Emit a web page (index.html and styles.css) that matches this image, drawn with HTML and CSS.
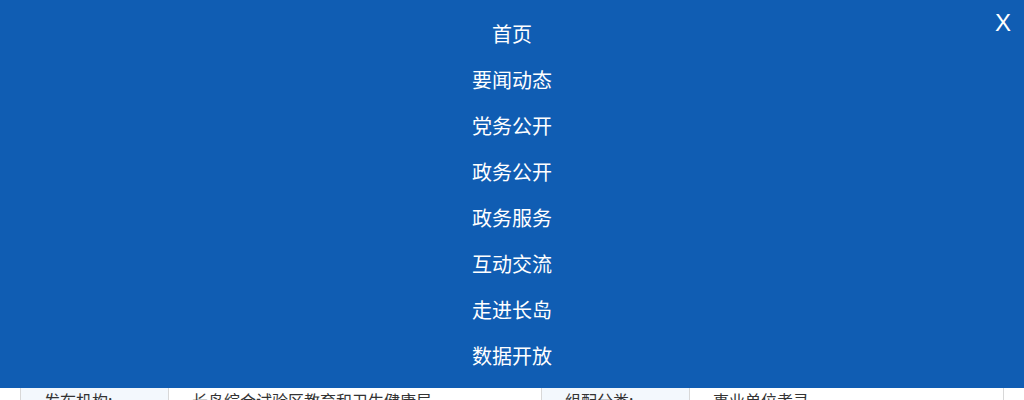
FILE: index.html
```html
<!DOCTYPE html>
<html lang="zh-CN">
<head>
<meta charset="utf-8">
<title>菜单</title>
<link rel="stylesheet" href="styles.css">
</head>
<body>
<div class="page">
  <div class="spacer"></div>
  <table class="info">
    <tr>
      <td class="label">发布机构:</td>
      <td class="value">长岛综合试验区教育和卫生健康局</td>
      <td class="label">组配分类:</td>
      <td class="value">事业单位考录</td>
    </tr>
  </table>
</div>
<nav class="overlay">
  <ul class="menu">
    <li>首页</li>
    <li>要闻动态</li>
    <li>党务公开</li>
    <li>政务公开</li>
    <li>政务服务</li>
    <li>互动交流</li>
    <li>走进长岛</li>
    <li>数据开放</li>
  </ul>
  <span class="close">X</span>
</nav>
</body>
</html>
```
FILE: styles.css
```css
html, body {
  margin: 0;
  padding: 0;
  background: #fff;
  font-family: "Noto Sans CJK SC", "Noto Sans", sans-serif;
}
.page {
  padding: 0 20px;
}
.spacer {
  height: 378px;
}
.info {
  width: 984px;
  border-collapse: collapse;
  font-size: 16px;
  color: #333;
}
.info td {
  border: 1px solid #d8d8d8;
  height: 44px;
  padding: 0 0 0 23px;
  box-sizing: border-box;
  vertical-align: top;
  padding-top: 9px;
  line-height: 24px;
}
.info td.label {
  width: 148px;
  background: #f3f8fd;
}
.info td.value {
  background: #fff;
}
.info tr:first-child td:nth-child(2) {
  width: 373px;
}
.overlay {
  position: fixed;
  top: 0;
  left: 0;
  right: 0;
  height: 388px;
  background: #105db3;
  color: #fff;
  box-sizing: border-box;
  padding-top: 11px;
}
.menu {
  list-style: none;
  margin: 0;
  padding: 0;
  text-align: center;
  font-size: 20px;
}
.menu li {
  line-height: 46px;
  height: 46px;
}
.close {
  position: absolute;
  top: 8px;
  right: 13px;
  font-family: "Liberation Sans", Arial, sans-serif;
  font-size: 24px;
  line-height: 30px;
}
```
